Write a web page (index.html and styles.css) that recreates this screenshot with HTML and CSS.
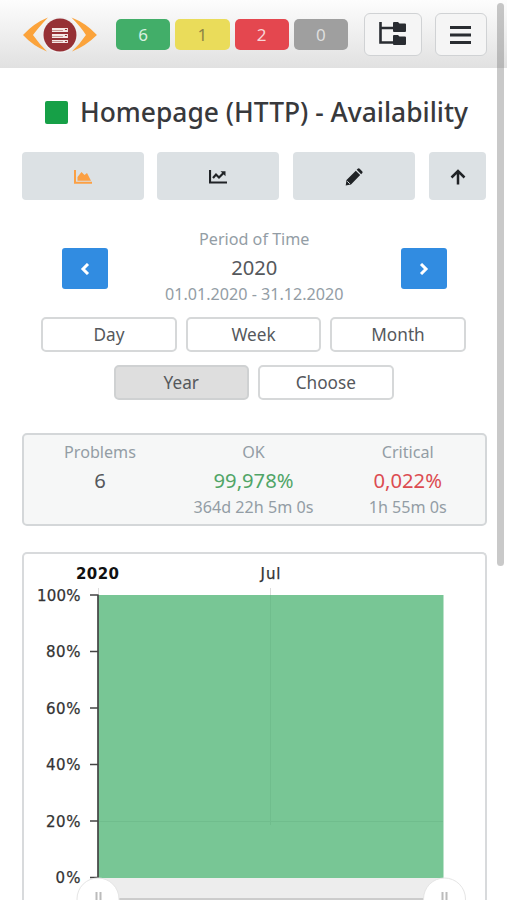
FILE: index.html
```html
<!DOCTYPE html>
<html lang="en">
<head>
<meta charset="utf-8">
<title>Homepage (HTTP) - Availability</title>
<link rel="stylesheet" href="styles.css">
</head>
<body>
<header class="topbar">
  <svg class="logo" width="74" height="36" viewBox="0 0 74 36">
    <path fill="#fba33b" d="M25 0.500Q11 6 0 18Q10 29 24 34.500Q17 28 10 18Q16 10 25 .5ZM48.500 .5Q63 6 74 18Q63 29 49 34.500Q57 27 63 18Q58 10 48.500 .5Z"/>
    <circle cx="37" cy="18" r="18" fill="#f1f1f1"/>
    <circle cx="37" cy="18" r="16.500" fill="#963035"/>
    <path fill="#f5e8e6" d="M29 11h16v4H29zM29 17h16v4H29zM29 23h16v3H29z"/>
    <path stroke="#c79692" d="M29 13.500h11M29 19.500h11M29 24.500h11"/>
    <path fill="#963035" d="M42 12h2v1h-2zM42 18h2v1h-2zM42 24h2v1h-2z"/>
  </svg>
  <div class="counts">
    <span class="count ok">6</span>
    <span class="count warning">1</span>
    <span class="count critical">2</span>
    <span class="count unknown">0</span>
  </div>
  <button class="tool tree" aria-label="Tree">
    <svg width="28" height="24" viewBox="0 0 28 24"><path d="M1.500 0v20.500H14M1.500 6H14" fill="none" stroke="#292c31" stroke-width="2.600"/><path fill="#292c31" d="M14 1q0-1 1-1h4l1.500 1.500H26q1 0 1 1V9q0 1-1 1H15q-1 0-1-1zM14 14q0-1 1-1h4l1.500 1.500H26q1 0 1 1V22q0 1-1 1H15q-1 0-1-1z"/></svg>
  </button>
  <button class="tool menu" aria-label="Menu">
    <svg width="21" height="20" viewBox="0 0 21 20"><path d="M0 2.500h21M0 10h21M0 17.500h21" stroke="#292c31" stroke-width="2.900"/></svg>
  </button>
</header>
<main>
  <h1><span class="state"></span><span class="title">Homepage (HTTP) - Availability</span></h1>
  <nav class="actions">
    <button aria-label="Availability"><svg width="18" height="14" viewBox="0 0 18 14"><path d="M1 0v12.700h17" fill="none" stroke="#fba044" stroke-width="2"/><path fill="#fba044" d="M3.500 10.800V7l4-5 3 3 2.500-2 4 7.800z"/></svg></button>
    <button aria-label="Performance"><svg width="18" height="14" viewBox="0 0 18 14"><path d="M1 0v12.500h17M4 8l3-3.500 3 3L14.500 3" fill="none" stroke="#202326" stroke-width="2.200"/><path fill="#202326" d="M11.500 1.200h5v5z"/></svg></button>
    <button aria-label="Edit"><svg width="18" height="18" viewBox="0 0 18 18"><path fill="#202326" d="M1.500 12 10.800 2.700l4.400 4.400L6 16.500l-5.300.9zM11.700 1.800l1-1q1-1 2 0l2.400 2.400q1 1 0 2l-1 1z"/><path d="m2.300 13.300 2.500 2.500" stroke="#dce1e4"/></svg></button>
    <button aria-label="Up"><svg width="16" height="16" viewBox="0 0 16 16"><path d="M8 15.500V2M1.500 8.500 8 2l6.500 6.500" fill="none" stroke="#202326" stroke-width="2.500"/></svg></button>
  </nav>
  <section class="period">
    <button class="step" aria-label="Previous"><svg width="10" height="12" viewBox="0 0 10 12"><path d="M8 1 3 6l5 5" fill="none" stroke="#fff" stroke-width="3"/></svg></button>
    <div class="figures">
      <span class="label">Period of Time</span>
      <strong>2020</strong>
      <span class="detail">01.01.2020 - 31.12.2020</span>
    </div>
    <button class="step" aria-label="Next"><svg width="10" height="12" viewBox="0 0 10 12"><path d="m2 1 5 5-5 5" fill="none" stroke="#fff" stroke-width="3"/></svg></button>
  </section>
  <div class="ranges">
    <button>Day</button><button>Week</button><button>Month</button>
    <button class="active">Year</button><button>Choose</button>
  </div>
  <section class="summary">
    <div class="figures"><span class="label">Problems</span><strong>6</strong></div>
    <div class="figures"><span class="label">OK</span><strong class="good">99,978%</strong><span class="detail">364d 22h 5m 0s</span></div>
    <div class="figures"><span class="label">Critical</span><strong class="bad">0,022%</strong><span class="detail">1h 55m 0s</span></div>
  </section>
  <section class="chart">
    <svg width="461" height="346" viewBox="24 554 461 346">
      <path d="M98.500 588v7M270.500 588v7" stroke="#ddd"/>
      <path fill="#78c695" d="M98 595h345.500v283H98z"/>
      <path d="M270.500 595v230M98 821.500h345" stroke="#70bd8d" fill="none"/>
      <path fill="#ededed" d="M98 878h346v36H98z"/>
      <path d="M98 899h346" stroke="#aaa"/>
      <path d="M98 594.500V878M90 595h8M90 651.500h8M90 708h8M90 764.500h8M90 821h8M90 877.500h8" fill="none" stroke="#444" stroke-width="1.700"/>
      <g class="axis-labels" text-anchor="end">
        <text x="80.500" y="601" textLength="43.500">100%</text>
        <text x="80.500" y="657" textLength="34.500">80%</text>
        <text x="80.500" y="714" textLength="34.500">60%</text>
        <text x="80.500" y="770" textLength="34.500">40%</text>
        <text x="80.500" y="827" textLength="34.500">20%</text>
        <text x="80.500" y="883" textLength="25">0%</text>
      </g>
      <g class="axis-labels" text-anchor="middle">
        <text class="major" x="97.500" y="579" textLength="43">2020</text>
        <text x="270.500" y="579" textLength="20">Jul</text>
      </g>
      <g class="grip"><circle cx="98" cy="899" r="21"/><path d="M96.500 892v12M100.500 892v12"/></g>
      <g class="grip"><circle cx="444.500" cy="899" r="21"/><path d="M442.500 892v12M446.500 892v12"/></g>
    </svg>
  </section>
</main>
<div class="scrollbar"></div>
</body>
</html>
```

FILE: styles.css
```css
* { box-sizing: border-box; }
body {
  margin: 0;
  height: 900px;
  overflow: hidden;
  display: flex;
  flex-direction: column;
  background: #fff;
  color: #55585c;
  font-family: "Noto Sans", "Open Sans", sans-serif;
}
svg { display: block; }
button { font: inherit; color: inherit; padding: 0; margin: 0; display: flex; align-items: center; justify-content: center; }
.topbar {
  flex: none;
  height: 68px;
  padding: 13px 20px 0 23px;
  display: flex;
  align-items: flex-start;
  background: linear-gradient(#fdfdfd, #e1e1e1);
}
.logo { margin-top: 4px; }
.counts { display: flex; gap: 5px; margin: 6px 16px 0 19px; }
.count {
  width: 54.300px;
  height: 31px;
  border-radius: 5px;
  font-size: 17px;
  line-height: 31px;
  text-align: center;
  color: #d9f0e0;
}
.ok { background: #42ae69; }
.warning { background: #eadc5a; color: #8d8445; }
.critical { background: #e4474f; color: #f8d5d7; }
.unknown { background: #9f9f9f; color: #dedede; }
.tool { height: 43px; border: 1.500px solid #d0d2d4; border-radius: 6px; background: #f5f5f5; }
.tool svg { margin-top: -2px; }
.menu svg { margin: 0 0 0 -1px; }
.tree { width: 58px; margin-right: 13px; }
.menu { width: 52px; }
main { flex: 1; min-height: 0; display: flex; flex-direction: column; padding: 0 20.500px 0 22px; }
h1 {
  height: 34px;
  margin: 27px 0 23px;
  display: flex;
  align-items: center;
  padding-left: 23px;
  gap: 12px;
  color: #38393c;
  font-size: 26.400px;
  font-weight: 500;
  line-height: 34px;
  white-space: nowrap;
}
.state { width: 23px; height: 23px; background: #16a047; border-radius: 2px; }
.actions { display: grid; grid-template-columns: 121.500px 122px 122px 57.500px; justify-content: space-between; }
.actions button { height: 47.500px; padding-top: 3px; border: 0; border-radius: 4px; background: #dce1e4; }
.period { margin: 26.500px 40px 0; display: flex; justify-content: space-between; align-items: flex-start; }
.step { width: 45.500px; height: 41px; margin-top: 22px; border: 0; border-radius: 3px; background: #318ce1; }
.figures { display: flex; flex-direction: column; align-items: center; white-space: nowrap; font-size: 16.150px; line-height: 26px; color: #939da5; }
.figures strong { font-size: 20.200px; font-weight: 400; line-height: 30px; color: #55585c; }
.figures .good { color: #50a567; }
.figures .bad { color: #dc4c51; }
.detail { line-height: 24px; }
.ranges { display: flex; flex-wrap: wrap; justify-content: center; gap: 13px 9px; margin: 11px 14px 0 12.500px; }
.ranges button { width: 135.500px; height: 35px; border: 2px solid #d6d8d9; border-radius: 5px; background: #fff; font-size: 17.200px; }
.ranges .active { background: #dedede; border-color: #cfd1d2; }
.summary {
  flex: none;
  height: 93px;
  margin-top: 33px;
  padding-top: 4px;
  border: 2px solid #d4d7d9;
  border-radius: 5px;
  background: #f6f7f7;
  display: grid;
  grid-template-columns: 152px 155px 1fr;
}
.chart { flex: 1; min-height: 0; overflow: hidden; margin-top: 26px; border: 2px solid #d8dadc; border-bottom: 0; border-radius: 5px 5px 0 0; }
.axis-labels { font-family: "DejaVu Sans", sans-serif; font-size: 15px; fill: #333; stroke: #333; stroke-width: .25px; }
.major { font-weight: 700; fill: #111; stroke: none; }
.grip circle { fill: #fff; stroke: #e5e5e5; }
.grip path { stroke: #bbb; stroke-width: 2; }
.scrollbar { position: absolute; left: 496.500px; top: 3px; width: 7px; height: 563px; border-radius: 4px; background: rgba(120, 120, 120, .4); }
```
